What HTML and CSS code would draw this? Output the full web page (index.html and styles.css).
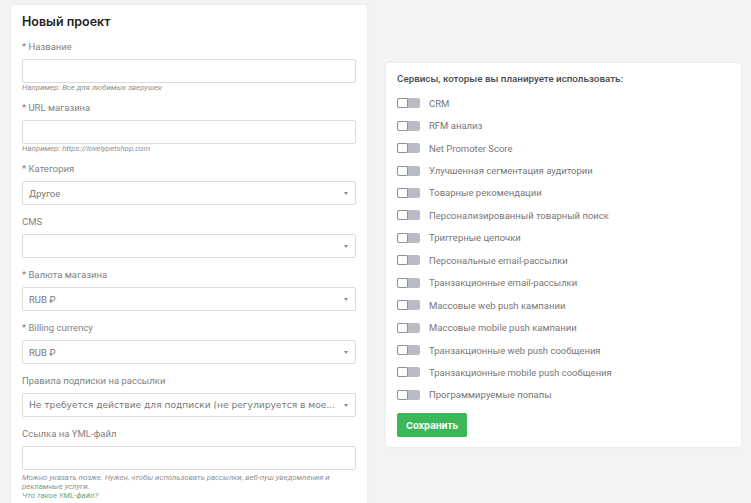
FILE: index.html
```html
<!DOCTYPE html>
<html lang="ru">
<head>
<meta charset="utf-8">
<title>Новый проект</title>
<link rel="stylesheet" href="styles.css">
</head>
<body>
<div class="page">
  <section class="card form-card">
    <h1 class="title">Новый проект</h1>

    <div class="field with-hint">
      <div class="label">* Название</div>
      <div class="input"></div>
      <div class="hint">Например: Все для любимых зверушек</div>
    </div>

    <div class="field with-hint">
      <div class="label">* URL магазина</div>
      <div class="input"></div>
      <div class="hint">Например: https://lovelypetshop.com</div>
    </div>

    <div class="field">
      <div class="label">* Категория</div>
      <div class="input select"><span class="value">Другое</span><span class="caret"></span></div>
    </div>

    <div class="field">
      <div class="label">CMS</div>
      <div class="input select"><span class="value"></span><span class="caret"></span></div>
    </div>

    <div class="field">
      <div class="label">* Валюта магазина</div>
      <div class="input select"><span class="value">RUB ₽</span><span class="caret"></span></div>
    </div>

    <div class="field">
      <div class="label">* Billing currency</div>
      <div class="input select"><span class="value">RUB ₽</span><span class="caret"></span></div>
    </div>

    <div class="field">
      <div class="label">Правила подписки на рассылки</div>
      <div class="input select"><span class="value wide">Не требуется действие для подписки (не регулируется в мое...</span><span class="caret"></span></div>
    </div>

    <div class="field">
      <div class="label">Ссылка на YML-файл</div>
      <div class="input"></div>
      <div class="hint multi">Можно указать позже. Нужен, чтобы использовать рассылки, веб-пуш уведомления и рекламные услуги.</div>
      <div class="hint link">Что такое YML-файл?</div>
    </div>
  </section>

  <section class="card services-card">
    <h2 class="services-title">Сервисы, которые вы планируете использовать:</h2>
    <ul class="services">
      <li class="service"><span class="toggle"><span class="knob"></span></span>CRM</li>
      <li class="service"><span class="toggle"><span class="knob"></span></span>RFM анализ</li>
      <li class="service"><span class="toggle"><span class="knob"></span></span>Net Promoter Score</li>
      <li class="service"><span class="toggle"><span class="knob"></span></span>Улучшенная сегментация аудитории</li>
      <li class="service"><span class="toggle"><span class="knob"></span></span>Товарные рекомендации</li>
      <li class="service"><span class="toggle"><span class="knob"></span></span>Персонализированный товарный поиск</li>
      <li class="service"><span class="toggle"><span class="knob"></span></span>Триггерные цепочки</li>
      <li class="service"><span class="toggle"><span class="knob"></span></span>Персональные email-рассылки</li>
      <li class="service"><span class="toggle"><span class="knob"></span></span>Транзакционные email-рассылки</li>
      <li class="service"><span class="toggle"><span class="knob"></span></span>Массовые web push кампании</li>
      <li class="service"><span class="toggle"><span class="knob"></span></span>Массовые mobile push кампании</li>
      <li class="service"><span class="toggle"><span class="knob"></span></span>Транзакционные web push сообщения</li>
      <li class="service"><span class="toggle"><span class="knob"></span></span>Транзакционные mobile push сообщения</li>
      <li class="service"><span class="toggle"><span class="knob"></span></span>Программируемые попапы</li>
    </ul>
    <button class="save" type="button">Сохранить</button>
  </section>
</div>
</body>
</html>
```

FILE: styles.css
```css
* { box-sizing: border-box; }

html, body {
  margin: 0;
  padding: 0;
  background: #f3f3f3;
  font-family: Roboto, "Noto Sans", "DejaVu Sans", sans-serif;
  color: #777;
  overflow: hidden;
}

.page {
  display: flex;
  align-items: flex-start;
  gap: 19px;
  padding: 5px 0 0 11px;
  height: 503px;
}

.card {
  background: #fff;
  border-radius: 3px;
  box-shadow: 0 0 2px rgba(0, 0, 0, 0.10);
}

.form-card {
  width: 356px;
  min-height: 520px;
  padding: 9px 11px 20px 11px;
}

.title {
  margin: 0 0 10px 0;
  font-family: Inter, Roboto, sans-serif;
  font-size: 12.5px;
  line-height: 16px;
  font-weight: 600;
  color: #1f1f1f;
}

.field { margin-bottom: 10px; }
.field.with-hint { margin-bottom: 9px; }

.label {
  font-size: 9.5px;
  line-height: 14px;
  color: #828282;
  margin-bottom: 5px;
}

.input {
  height: 24px;
  border: 1px solid #dcdcdc;
  border-radius: 2px;
  background: #fff;
}

.select {
  display: flex;
  align-items: center;
  padding: 0 7px 0 6px;
  font-size: 9.5px;
  color: #777;
}

.select .value {
  flex: 1;
  white-space: nowrap;
}

.select .value.wide {
  font-family: "DejaVu Sans", sans-serif;
  font-size: 9.1px;
  color: #777;
}

.caret {
  width: 0;
  height: 0;
  border-left: 2.5px solid transparent;
  border-right: 2.5px solid transparent;
  border-top: 3px solid #8a8a8a;
}

.hint {
  font-size: 7.8px;
  line-height: 9px;
  font-style: italic;
  color: #919191;
}

.field .input + .hint.multi { margin-top: 3px; }

.hint.link { color: #5cab83; }

.services-card {
  width: 355px;
  margin-top: 58px;
  padding: 9px 11px 10px 11px;
}

.services-title {
  margin: 0 0 6px 0;
  font-size: 9.8px;
  line-height: 14px;
  font-weight: 500;
  color: #4a4a4a;
}

.services {
  list-style: none;
  margin: 0 0 7px 0;
  padding: 0;
}

.service {
  display: flex;
  align-items: center;
  height: 22.45px;
  font-size: 9.5px;
  color: #777;
}

.toggle {
  position: relative;
  display: inline-block;
  width: 23px;
  height: 10px;
  margin-right: 9px;
  background: #b9bdc3;
  border-radius: 2px;
}

.knob {
  position: absolute;
  left: 0;
  top: 0;
  width: 11px;
  height: 10px;
  background: #fff;
  border: 1px solid #8f9399;
  border-radius: 2px;
}

.save {
  display: block;
  width: 70px;
  height: 24px;
  padding: 0;
  border: none;
  border-radius: 2px;
  background: #3bb75a;
  color: #fff;
  font-family: Inter, Roboto, sans-serif;
  font-size: 9.5px;
  font-weight: 700;
  cursor: pointer;
}
```
